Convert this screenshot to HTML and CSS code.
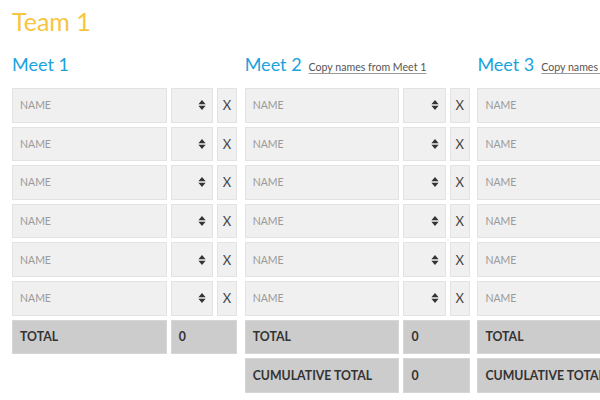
FILE: index.html
```
<!DOCTYPE html>
<html>
<head>
<meta charset="utf-8">
<link rel="stylesheet" href="styles.css">
</head>
<body>
<div class="page">
  <h1 class="team">Team 1</h1>
  <div class="meets">
    <section class="meet">
      <div class="meet-head"><h2>Meet 1</h2></div>
      <div class="grid">
        <div class="field name">NAME</div><div class="field sel"><svg width="8" height="10" viewBox="0 0 8 10"><path d="M4 0L7.6 4.2H0.4Z M4 10L7.6 5.8H0.4Z" fill="#333"/></svg></div><div class="field del">X</div>
        <div class="field name">NAME</div><div class="field sel"><svg width="8" height="10" viewBox="0 0 8 10"><path d="M4 0L7.6 4.2H0.4Z M4 10L7.6 5.8H0.4Z" fill="#333"/></svg></div><div class="field del">X</div>
        <div class="field name">NAME</div><div class="field sel"><svg width="8" height="10" viewBox="0 0 8 10"><path d="M4 0L7.6 4.2H0.4Z M4 10L7.6 5.8H0.4Z" fill="#333"/></svg></div><div class="field del">X</div>
        <div class="field name">NAME</div><div class="field sel"><svg width="8" height="10" viewBox="0 0 8 10"><path d="M4 0L7.6 4.2H0.4Z M4 10L7.6 5.8H0.4Z" fill="#333"/></svg></div><div class="field del">X</div>
        <div class="field name">NAME</div><div class="field sel"><svg width="8" height="10" viewBox="0 0 8 10"><path d="M4 0L7.6 4.2H0.4Z M4 10L7.6 5.8H0.4Z" fill="#333"/></svg></div><div class="field del">X</div>
        <div class="field name">NAME</div><div class="field sel"><svg width="8" height="10" viewBox="0 0 8 10"><path d="M4 0L7.6 4.2H0.4Z M4 10L7.6 5.8H0.4Z" fill="#333"/></svg></div><div class="field del">X</div>
        <div class="tot label">TOTAL</div><div class="tot value">0</div>
      </div>
    </section>
    <section class="meet">
      <div class="meet-head"><h2>Meet 2</h2><span class="copy">Copy names from Meet 1</span></div>
      <div class="grid">
        <div class="field name">NAME</div><div class="field sel"><svg width="8" height="10" viewBox="0 0 8 10"><path d="M4 0L7.6 4.2H0.4Z M4 10L7.6 5.8H0.4Z" fill="#333"/></svg></div><div class="field del">X</div>
        <div class="field name">NAME</div><div class="field sel"><svg width="8" height="10" viewBox="0 0 8 10"><path d="M4 0L7.6 4.2H0.4Z M4 10L7.6 5.8H0.4Z" fill="#333"/></svg></div><div class="field del">X</div>
        <div class="field name">NAME</div><div class="field sel"><svg width="8" height="10" viewBox="0 0 8 10"><path d="M4 0L7.6 4.2H0.4Z M4 10L7.6 5.8H0.4Z" fill="#333"/></svg></div><div class="field del">X</div>
        <div class="field name">NAME</div><div class="field sel"><svg width="8" height="10" viewBox="0 0 8 10"><path d="M4 0L7.6 4.2H0.4Z M4 10L7.6 5.8H0.4Z" fill="#333"/></svg></div><div class="field del">X</div>
        <div class="field name">NAME</div><div class="field sel"><svg width="8" height="10" viewBox="0 0 8 10"><path d="M4 0L7.6 4.2H0.4Z M4 10L7.6 5.8H0.4Z" fill="#333"/></svg></div><div class="field del">X</div>
        <div class="field name">NAME</div><div class="field sel"><svg width="8" height="10" viewBox="0 0 8 10"><path d="M4 0L7.6 4.2H0.4Z M4 10L7.6 5.8H0.4Z" fill="#333"/></svg></div><div class="field del">X</div>
        <div class="tot label">TOTAL</div><div class="tot value">0</div>
        <div class="tot label">CUMULATIVE TOTAL</div><div class="tot value">0</div>
      </div>
    </section>
    <section class="meet">
      <div class="meet-head"><h2>Meet 3</h2><span class="copy">Copy names from Meet 2</span></div>
      <div class="grid">
        <div class="field name">NAME</div><div class="field sel"><svg width="8" height="10" viewBox="0 0 8 10"><path d="M4 0L7.6 4.2H0.4Z M4 10L7.6 5.8H0.4Z" fill="#333"/></svg></div><div class="field del">X</div>
        <div class="field name">NAME</div><div class="field sel"><svg width="8" height="10" viewBox="0 0 8 10"><path d="M4 0L7.6 4.2H0.4Z M4 10L7.6 5.8H0.4Z" fill="#333"/></svg></div><div class="field del">X</div>
        <div class="field name">NAME</div><div class="field sel"><svg width="8" height="10" viewBox="0 0 8 10"><path d="M4 0L7.6 4.2H0.4Z M4 10L7.6 5.8H0.4Z" fill="#333"/></svg></div><div class="field del">X</div>
        <div class="field name">NAME</div><div class="field sel"><svg width="8" height="10" viewBox="0 0 8 10"><path d="M4 0L7.6 4.2H0.4Z M4 10L7.6 5.8H0.4Z" fill="#333"/></svg></div><div class="field del">X</div>
        <div class="field name">NAME</div><div class="field sel"><svg width="8" height="10" viewBox="0 0 8 10"><path d="M4 0L7.6 4.2H0.4Z M4 10L7.6 5.8H0.4Z" fill="#333"/></svg></div><div class="field del">X</div>
        <div class="field name">NAME</div><div class="field sel"><svg width="8" height="10" viewBox="0 0 8 10"><path d="M4 0L7.6 4.2H0.4Z M4 10L7.6 5.8H0.4Z" fill="#333"/></svg></div><div class="field del">X</div>
        <div class="tot label">TOTAL</div><div class="tot value">0</div>
        <div class="tot label">CUMULATIVE TOTAL</div><div class="tot value">0</div>
      </div>
    </section>
  </div>
</div>
</body>
</html>
```
FILE: styles.css
```
html, body {
  margin: 0;
  padding: 0;
  background: #fff;
  overflow: hidden;
}
.page {
  width: 600px;
  height: 400px;
  overflow: hidden;
  padding: 6px 0 0 12px;
  box-sizing: border-box;
  font-family: Lato, "Liberation Sans", sans-serif;
}
.team {
  margin: 0;
  font-size: 25px;
  line-height: 31px;
  font-weight: 400;
  color: #f8c53f;
}
.meets {
  display: flex;
  gap: 8px;
  margin-top: 16px;
}
.meet {
  flex: 0 0 224.7px;
  width: 224.7px;
}
.meet-head {
  display: flex;
  align-items: baseline;
  gap: 7px;
  height: 23px;
  white-space: nowrap;
}
.meet-head h2 {
  margin: 0;
  font-size: 18px;
  line-height: 23px;
  font-weight: 400;
  color: #19a3dd;
}
.copy {
  font-size: 10.6px;
  color: #555;
  text-decoration: underline;
  text-decoration-color: #999;
  text-underline-offset: 2px;
}
.grid {
  margin-top: 12px;
  display: grid;
  grid-template-columns: 154.7px 42.6px 19.6px;
  grid-auto-rows: 34.6px;
  column-gap: 4px;
  row-gap: 4px;
}
.field {
  background: #f0f0f0;
  border: 1px solid #e3e3e3;
  box-sizing: border-box;
  display: flex;
  align-items: center;
}
.name {
  padding-left: 7px;
  font-size: 10.5px;
  color: #9a9a9a;
}
.sel {
  justify-content: flex-end;
  padding-right: 6px;
}
.del {
  justify-content: center;
  font-size: 13px;
  color: #444;
}
.tot {
  background: #cccccc;
  border: 1px solid #d6d6d6;
  box-sizing: border-box;
  display: flex;
  align-items: center;
  padding-left: 7px;
  font-size: 12.3px;
  font-weight: 700;
  color: #333;
  white-space: nowrap;
  overflow: hidden;
}
.value {
  grid-column: 2 / span 2;
}
```
